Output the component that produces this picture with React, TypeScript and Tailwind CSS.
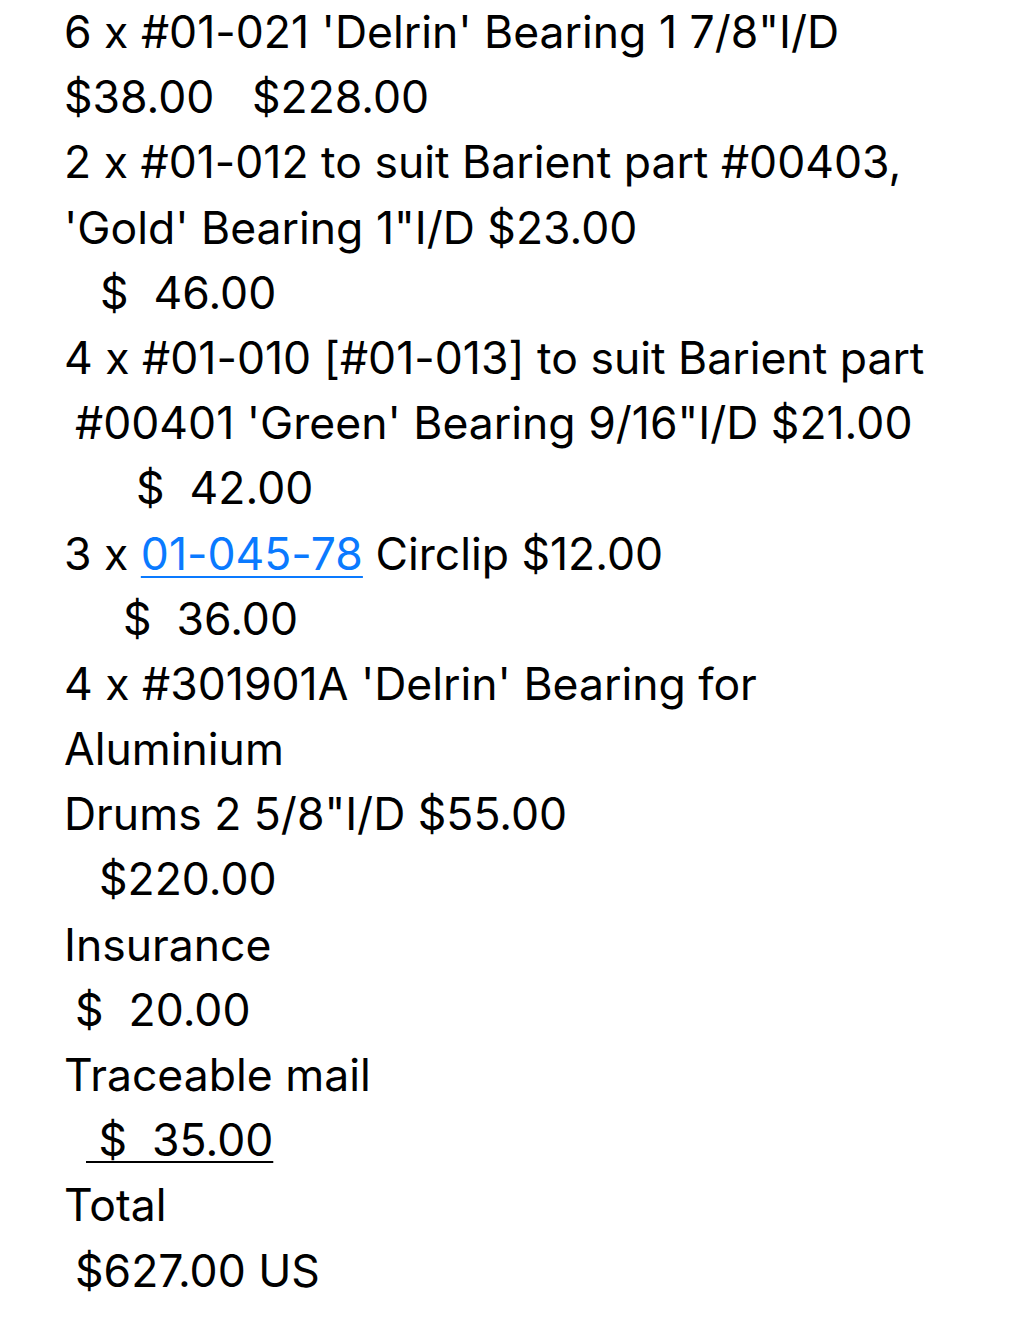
const Row = ({ className = '', children }: { className?: string; children: React.ReactNode }) => (
  <div className={`h-[65.2px] leading-[65.2px] whitespace-pre ${className}`}>{children}</div>
);

export default function App() {
  return (
    <div className="min-h-[1322px] bg-white pl-[64px] text-black text-[44.5px] [font-feature-settings:'calt'_0] font-['Inter','Liberation_Sans',sans-serif]">
      <Row>6 x #01-021 'Delrin' Bearing 1 7/8"I/D</Row>
      <Row>$38.00   $228.00</Row>
      <Row>2 x #01-012 to suit Barient part #00403,</Row>
      <Row>'Gold' Bearing 1"I/D $23.00</Row>
      <Row className="pl-[36px]">$  46.00</Row>
      <Row>4 x #01-010 [#01-013] to suit Barient part</Row>
      <Row className="pl-[11px]">#00401 'Green' Bearing 9/16"I/D $21.00</Row>
      <Row className="pl-[72px]">$  42.00</Row>
      <Row>
        3 x{' '}
        <a href="#" className="text-[#0a7aff] underline decoration-2 underline-offset-[6px]">
          01-045-78
        </a>{' '}
        Circlip $12.00
      </Row>
      <Row className="pl-[59px]">$  36.00</Row>
      <Row>4 x #301901A 'Delrin' Bearing for</Row>
      <Row>Aluminium</Row>
      <Row>Drums 2 5/8"I/D $55.00</Row>
      <Row className="pl-[35px]">$220.00</Row>
      <Row>Insurance</Row>
      <Row className="pl-[11px]">$  20.00</Row>
      <Row>Traceable mail</Row>
      <Row className="pl-[22px]">
        <span className="underline decoration-2 underline-offset-[5px]"> $  35.00</span>
      </Row>
      <Row>Total</Row>
      <Row className="pl-[11px]">$627.00 US</Row>
    </div>
  );
}
